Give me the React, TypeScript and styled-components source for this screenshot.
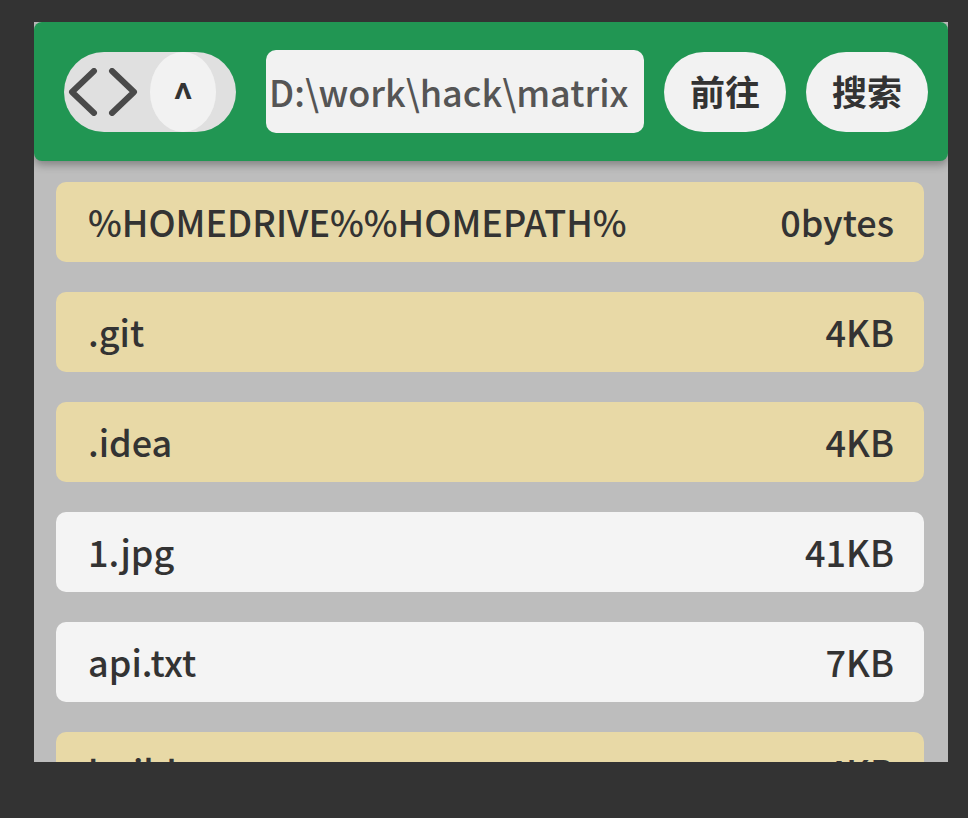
import React from "react";
import styled, { createGlobalStyle } from "styled-components";

const Global = createGlobalStyle`
  html, body { margin: 0; padding: 0; background: #333333; }
  body { font-family: "Noto Sans CJK SC", "Noto Sans", sans-serif; }
  * { box-sizing: border-box; }
`;

const Page = styled.div`
  padding: 22px 0 0 34px;
  height: 818px;
`;

const Panel = styled.div`
  width: 914px;
  height: 740px;
  background: #bdbdbd;
  overflow: hidden;
  display: flex;
  flex-direction: column;
`;

const Header = styled.header`
  position: relative;
  z-index: 1;
  flex: none;
  height: 139px;
  background: #219653;
  border-radius: 8px;
  box-shadow: 0 4px 8px rgba(0, 0, 0, 0.3);
  display: flex;
  align-items: center;
  padding: 0 20px 0 30px;
`;

const Toggle = styled.div`
  width: 172px;
  height: 80px;
  border-radius: 40px;
  background: #e0e0e0;
  display: flex;
  align-items: center;
  flex: none;
`;

const Arrows = styled.div`
  width: 86px;
  display: flex;
  justify-content: flex-start;
  padding-left: 2px;
`;

const Knob = styled.div`
  width: 66px;
  height: 80px;
  border-radius: 33px / 40px;
  background: #f2f2f2;
  display: flex;
  justify-content: center;
  color: #333;
  font-weight: 700;
  font-size: 36px;
  line-height: 1;
  padding-top: 24px;
`;

const PathBox = styled.div`
  margin-left: 30px;
  width: 378px;
  height: 83px;
  border-radius: 10px;
  background: #f2f2f2;
  color: #555;
  font-size: 36px;
  font-weight: 500;
  display: flex;
  align-items: center;
  padding: 0 0 2px 3px;
  white-space: nowrap;
  overflow: hidden;
  flex: none;
`;

const Pill = styled.button`
  margin-left: 20px;
  width: 122px;
  height: 80px;
  border-radius: 40px;
  border: none;
  background: #f2f2f2;
  color: #333;
  font-family: "Noto Sans CJK SC", sans-serif;
  font-weight: 700;
  font-size: 35px;
  padding: 0 0 2px;
  flex: none;
`;

const List = styled.div`
  display: flex;
  flex-direction: column;
  gap: 30px;
  padding: 21px 24px 0 22px;
`;

const Row = styled.div<{ $dir: boolean }>`
  flex: none;
  height: 80px;
  border-radius: 10px;
  background: ${(p) => (p.$dir ? "#e8d9a6" : "#f4f4f4")};
  color: #333;
  font-size: 36px;
  font-weight: 500;
  display: flex;
  align-items: center;
  justify-content: space-between;
  padding: 0 30px 3px 32px;
`;

const items = [
  { name: "%HOMEDRIVE%%HOMEPATH%", size: "0bytes", dir: true },
  { name: ".git", size: "4KB", dir: true },
  { name: ".idea", size: "4KB", dir: true },
  { name: "1.jpg", size: "41KB", dir: false },
  { name: "api.txt", size: "7KB", dir: false },
  { name: "build", size: "4KB", dir: true },
];

export default function App() {
  return (
    <>
      <Global />
      <Page>
        <Panel>
          <Header>
            <Toggle>
              <Arrows>
                <svg width="74" height="48" viewBox="0 0 74 48" fill="none">
                  <path d="M28 3 L6 24 L28 45" stroke="#4a4a4a" strokeWidth="6" strokeLinecap="round" strokeLinejoin="round" />
                  <path d="M46 3 L68 24 L46 45" stroke="#4a4a4a" strokeWidth="6" strokeLinecap="round" strokeLinejoin="round" />
                </svg>
              </Arrows>
              <Knob>^</Knob>
            </Toggle>
            <PathBox>D:\work\hack\matrix</PathBox>
            <Pill>前往</Pill>
            <Pill>搜索</Pill>
          </Header>
          <List>
            {items.map((it) => (
              <Row key={it.name} $dir={it.dir}>
                <span>{it.name}</span>
                <span>{it.size}</span>
              </Row>
            ))}
          </List>
        </Panel>
      </Page>
    </>
  );
}
